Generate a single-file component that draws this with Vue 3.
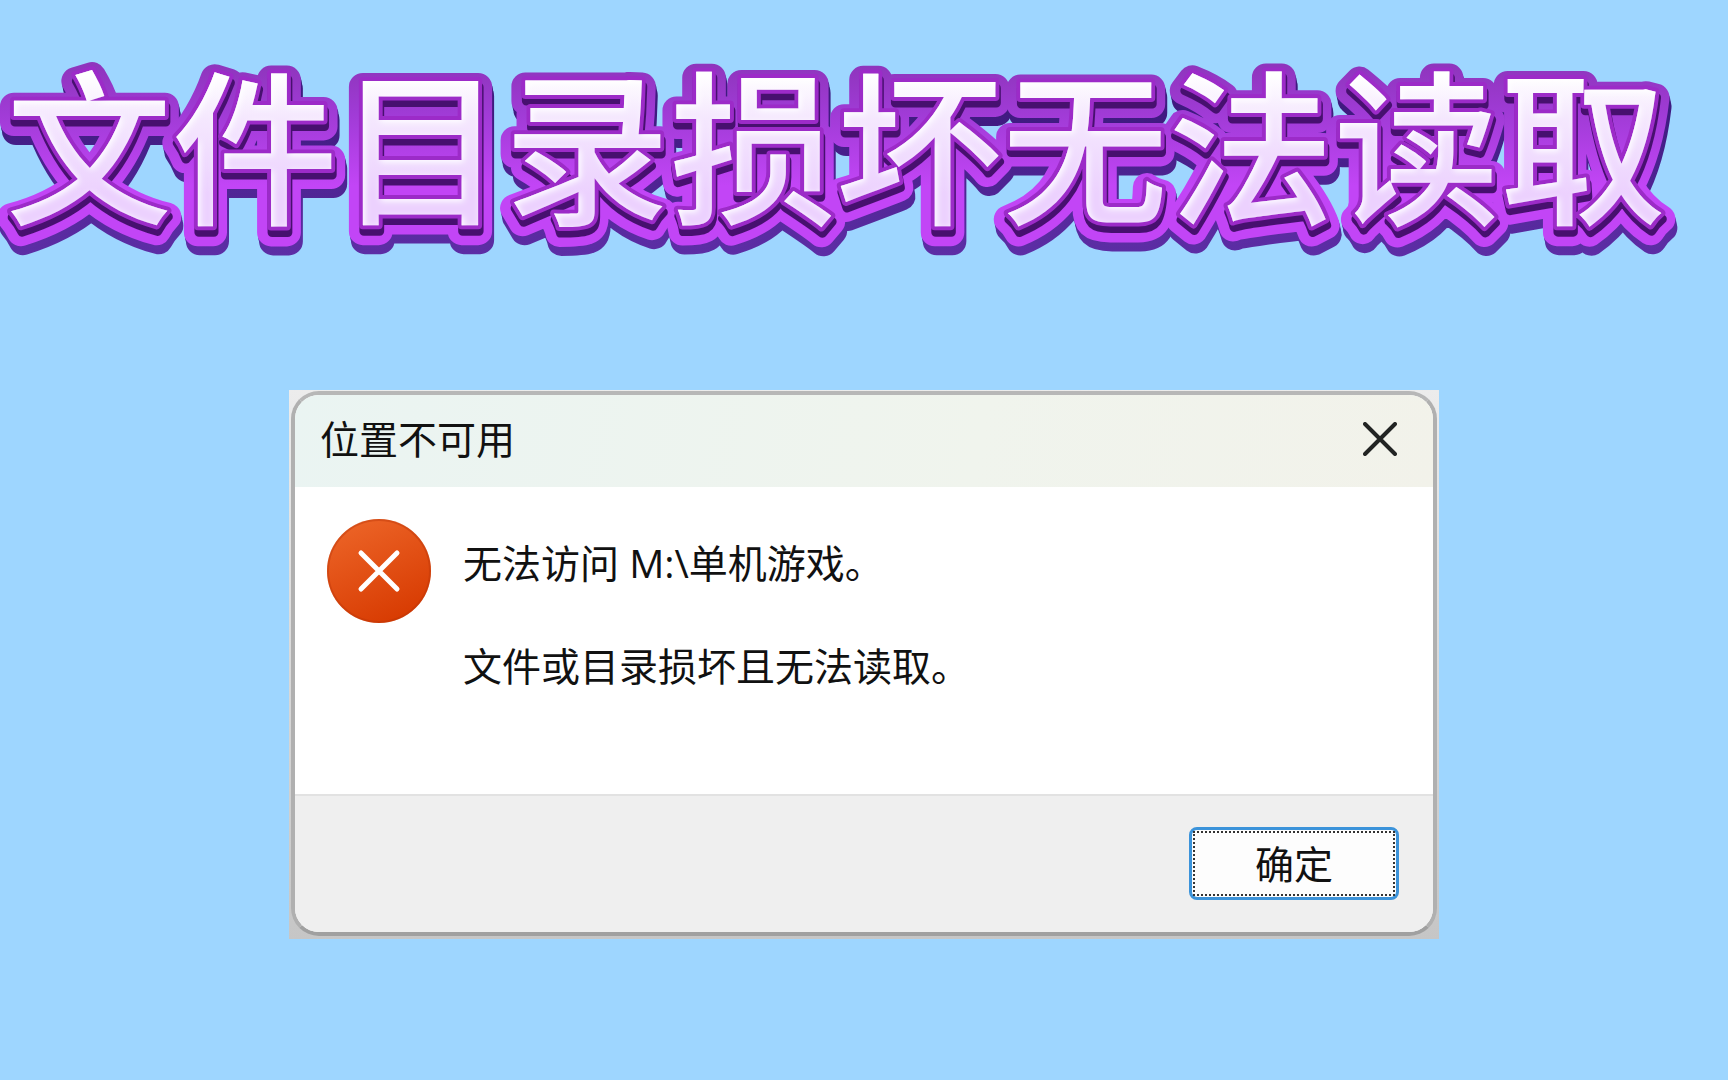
<script setup>
import { ref } from 'vue'

const headline = '文件目录损坏无法读取'
const title = '位置不可用'
const messages = ['无法访问 M:\\单机游戏。', '文件或目录损坏且无法读取。']
const open = ref(true)
</script>

<template>
  <main class="page">
    <h1 class="headline">
      <svg class="headline-art" viewBox="0 0 1728 390">
        <defs>
          <linearGradient id="rim" gradientUnits="userSpaceOnUse" x1="0" y1="60" x2="0" y2="180">
            <stop offset="0" stop-color="#8f35bd" />
            <stop offset="0.4" stop-color="#a03bd6" />
            <stop offset="1" stop-color="#c245f6" />
          </linearGradient>
          <linearGradient id="face" gradientUnits="userSpaceOnUse" x1="0" y1="75" x2="0" y2="195">
            <stop offset="0" stop-color="#ffffff" />
            <stop offset="0.35" stop-color="#f5e8fe" />
            <stop offset="1" stop-color="#ecd1fe" />
          </linearGradient>
          <linearGradient id="base" gradientUnits="userSpaceOnUse" x1="0" y1="100" x2="0" y2="250">
            <stop offset="0" stop-color="#3f1a80" />
            <stop offset="1" stop-color="#5f2fa8" />
          </linearGradient>
          <filter id="bevel" filterUnits="userSpaceOnUse" x="0" y="50" width="1728" height="220">
            <feGaussianBlur in="SourceAlpha" stdDeviation="3" />
            <feOffset dx="2" dy="2" result="core" />
            <feFlood flood-color="#ffffff" />
            <feComposite in2="core" operator="out" />
            <feComposite in2="SourceAlpha" operator="in" result="shine" />
            <feMerge>
              <feMergeNode in="SourceGraphic" />
              <feMergeNode in="shine" />
            </feMerge>
          </filter>
          <text id="word" class="word" x="6" y="212">{{ headline }}</text>
        </defs>
        <g stroke-linejoin="round">
          <use href="#word" x="2" y="15" fill="url(#base)" stroke="url(#base)" stroke-width="28" />
          <use href="#word" x="1" y="10" fill="url(#base)" stroke="url(#base)" stroke-width="28" />
          <use href="#word" x="0" y="6" fill="url(#rim)" stroke="url(#rim)" stroke-width="28" />
          <use href="#word" x="1" y="6" fill="#47106f" stroke="#47106f" stroke-width="9" />
          <use href="#word" fill="#9c2bc8" stroke="#9c2bc8" stroke-width="8" />
          <use href="#word" fill="url(#face)" filter="url(#bevel)" />
        </g>
      </svg>
    </h1>

    <div v-if="open" class="backdrop">
      <section class="dialog" role="alertdialog" aria-labelledby="dialog-title">
        <header class="titlebar">
          <h2 id="dialog-title">{{ title }}</h2>
          <button class="close" type="button" aria-label="关闭" @click="open = false">
            <svg width="34" height="34" viewBox="0 0 34 34" fill="none" stroke="#222423" stroke-width="4" stroke-linecap="round">
              <path d="M2 2 32 32M32 2 2 32" />
            </svg>
          </button>
        </header>
        <div class="body">
          <svg class="error" width="104" height="104" viewBox="0 0 104 104">
            <defs>
              <linearGradient id="disc" x1="0.25" y1="0" x2="0.7" y2="1">
                <stop offset="0" stop-color="#ec6427" />
                <stop offset="1" stop-color="#d73a01" />
              </linearGradient>
            </defs>
            <circle cx="52" cy="52" r="52" fill="url(#disc)" />
            <circle cx="52" cy="52" r="51" fill="none" stroke="#b93408" stroke-opacity="0.4" stroke-width="2" />
            <path d="M34 34 70 70M70 34 34 70" fill="none" stroke="#fff" stroke-width="5" stroke-linecap="round" />
          </svg>
          <div class="messages">
            <p v-for="m in messages" :key="m">{{ m }}</p>
          </div>
        </div>
        <footer class="footer">
          <button class="ok" type="button" @click="open = false"><span>确定</span></button>
        </footer>
      </section>
    </div>
  </main>
</template>

<style>
body {
  margin: 0;
  background: #9ed6ff;
}
</style>

<style scoped>
.page {
  min-height: 100vh;
  box-sizing: border-box;
  background: #9ed6ff;
  color: #111;
  font-family: "Open Sans", "Noto Sans CJK SC", sans-serif;
}

.headline {
  margin: 0;
}

.headline-art {
  display: block;
  width: 100%;
}

.word {
  font-family: "Noto Sans CJK SC", sans-serif;
  font-size: 166px;
  font-weight: 500;
}

.backdrop {
  margin: 0 289px;
  padding: 1px 2px 3px;
  background: linear-gradient(#ececec, #c6c6c6);
}

.dialog {
  border: 4px solid #b0b0b0;
  border-top-color: #b7b7b7;
  border-bottom-color: #a0a0a0;
  border-radius: 28px;
  overflow: hidden;
  background: #fff;
}

.titlebar {
  display: flex;
  align-items: center;
  justify-content: space-between;
  height: 92px;
  padding: 0 36px 4px 25px;
  box-sizing: border-box;
  background: linear-gradient(100deg, #eaf4f2, #f0f4ed 60%, #f2f2ea);
}

h2 {
  margin: 0;
  font-size: 39px;
  font-weight: 400;
  line-height: 48px;
}

.close {
  display: flex;
  padding: 0;
  border: 0;
  background: none;
}

.body {
  display: flex;
  gap: 32px;
  min-height: 307px;
  padding: 32px;
  box-sizing: border-box;
}

.error {
  flex: none;
}

.messages {
  display: flex;
  flex-direction: column;
  gap: 55px;
  padding-top: 20px;
}

.messages p {
  margin: 0;
  font-size: 39px;
  line-height: 48px;
}

.footer {
  display: flex;
  justify-content: flex-end;
  padding: 31px 34px 32px;
  border-top: 2px solid #e2e2e2;
  background: #efefef;
}

.ok {
  width: 210px;
  height: 73px;
  padding: 1px;
  border: 3px solid #3b93da;
  border-radius: 8px;
  background: #fdfdfd;
  color: #111;
  font: 400 39px/48px "Noto Sans CJK SC", sans-serif;
}

.ok span {
  display: flex;
  align-items: center;
  justify-content: center;
  height: 100%;
  padding-bottom: 4px;
  box-sizing: border-box;
  border: 2px dotted #333;
}
</style>
